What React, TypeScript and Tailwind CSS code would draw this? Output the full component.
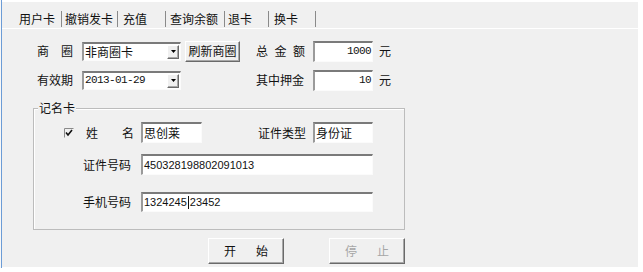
import React from 'react';

const cjk = "font-['Noto_Sans_CJK_SC','Noto_Sans',sans-serif]";
const sunken =
  'bg-white border-t-2 border-l-2 border-r border-b border-t-[#7a7a7a] border-l-[#9a9a9a] border-r-[#fbfbfb] border-b-[#fbfbfb]';
const raised =
  'bg-[#f0f0f0] border border-t-white border-l-white border-r-[#6a6a6a] border-b-[#6a6a6a] shadow-[inset_-1px_-1px_0_#a8a8a8]';

const tabs = [
  { label: '用户卡', w: 'w-[48px]', pl: 'pl-[5px]' },
  { label: '撤销发卡', w: 'w-[56px]', pl: 'pl-[3px]' },
  { label: '充值', w: 'w-[48px]', pl: 'pl-[5px]' },
  { label: '查询余额', w: 'w-[59px]', pl: 'pl-[4px]' },
  { label: '退卡', w: 'w-[44px]', pl: 'pl-[3px]' },
  { label: '换卡', w: 'w-[47px]', pl: 'pl-[5px]' },
];

function Spread({ chars, w }: { chars: string[]; w: string }) {
  return (
    <div className={`flex justify-between ${w}`}>
      {chars.map((c, i) => (
        <span key={i}>{c}</span>
      ))}
    </div>
  );
}

function Combo({ value, mono }: { value: string; mono?: boolean }) {
  return (
    <div className={`${sunken} w-[99px] h-[19px] flex items-center justify-between pr-[1px]`}>
      <span
        className={
          mono
            ? "pl-[1px] text-[11px] tracking-[-0.6px] font-['Liberation_Mono',monospace] leading-none"
            : 'pl-[1px] leading-none'
        }
      >
        {value}
      </span>
      <div className={`${raised} w-[12px] h-[14px] flex items-center justify-center`}>
        <svg width="5" height="3" viewBox="0 0 5 3">
          <path d="M0 0h5L2.5 3z" fill="#000" />
        </svg>
      </div>
    </div>
  );
}

function NumBox({ value }: { value: string }) {
  return (
    <div
      className={`${sunken} w-[60px] h-[21px] flex items-center justify-end pr-[1px] text-[11px] tracking-[-0.6px] font-['Liberation_Mono',monospace]`}
    >
      {value}
    </div>
  );
}

export default function App() {
  return (
    <div className={`w-[643px] h-[272px] bg-white flex ${cjk} text-[12px] text-[#111]`}>
      <div className="w-[1px] h-[268px] bg-[#f8f8f8]" />
      <div className="w-[1px] h-[268px] bg-[#6c9cd6]" />

      <div className="w-[636px] h-[265px] mt-[2px] bg-[#f0f0f0] flex flex-col">
        {/* Tabs */}
        <div className="h-[27px] flex items-end pl-[12px] pb-[1px] border-b border-white shrink-0">
          {tabs.map((t) => (
            <div
              key={t.label}
              className={`${t.w} ${t.pl} h-[16px] flex items-center border-r border-[#8a8a8a] leading-none`}
            >
              {t.label}
            </div>
          ))}
        </div>

        {/* Row 1 */}
        <div className="mt-[11px] h-[22px] flex items-center pl-[35px] shrink-0">
          <Spread chars={['商', '圈']} w="w-[36px]" />
          <div className="ml-[9px]">
            <Combo value="非商圈卡" />
          </div>
          <div className={`${raised} ml-[4px] w-[55px] h-[21px] flex items-center justify-center leading-none`}>
            刷新商圈
          </div>
          <div className="ml-[16px]">
            <Spread chars={['总', '金', '额']} w="w-[49px]" />
          </div>
          <div className="ml-[8px]">
            <NumBox value="1000" />
          </div>
          <span className="ml-[6px]">元</span>
        </div>

        {/* Row 2 */}
        <div className="mt-[7px] h-[22px] flex items-center pl-[35px] shrink-0">
          <span className="w-[36px]">有效期</span>
          <div className="ml-[9px]">
            <Combo value="2013-01-29" mono />
          </div>
          <span className="ml-[75px] w-[48px]">其中押金</span>
          <div className="ml-[9px]">
            <NumBox value="10" />
          </div>
          <span className="ml-[6px]">元</span>
        </div>

        {/* 记名卡 group */}
        <div className="relative mt-[17px] ml-[31px] w-[372px] h-[122px] border border-[#bcbcbc] shadow-[inset_1px_1px_0_#fff] shrink-0">
          <span className="absolute left-[4px] top-[-9px] px-[1px] bg-[#f0f0f0] leading-[16px]">记名卡</span>

          <div className="mt-[13px] h-[21px] flex items-center">
            <svg className="ml-[30px]" width="10" height="10" viewBox="0 0 10 10">
              <path d="M0.5 9.5V0.5H9.5" fill="none" stroke="#8a8a8a" />
              <path d="M2 4.5l2 2.5 4-5" fill="none" stroke="#111" strokeWidth="1.6" />
            </svg>
            <div className="ml-[12px]">
              <Spread chars={['姓', '名']} w="w-[48px]" />
            </div>
            <div className={`${sunken} ml-[7px] w-[61px] h-[21px] flex items-center pl-[1px] leading-none`}>思创莱</div>
            <span className="ml-[56px] w-[48px]">证件类型</span>
            <div className={`${sunken} ml-[7px] w-[60px] h-[21px] flex items-center pl-[1px] leading-none`}>身份证</div>
          </div>

          <div className="mt-[11px] h-[21px] flex items-center">
            <span className="ml-[49px] w-[48px]">证件号码</span>
            <div
              className={`${sunken} ml-[10px] w-[232px] h-[21px] flex items-center pl-[1px] text-[11px] font-['Liberation_Sans',sans-serif]`}
            >
              450328198802091013
            </div>
          </div>

          <div className="mt-[17px] h-[20px] flex items-center">
            <span className="ml-[49px] w-[48px]">手机号码</span>
            <div
              className={`${sunken} ml-[10px] w-[232px] h-[20px] flex items-center pl-[1px] text-[11px] font-['Liberation_Sans',sans-serif]`}
            >
              1324245
              <span className="w-[1px] h-[13px] bg-[#111] mx-[1px]" />
              23452
            </div>
          </div>
        </div>

        {/* Buttons */}
        <div className="mt-[8px] h-[26px] flex pl-[206px] shrink-0">
          <div className={`${raised} w-[76px] h-[26px] flex items-center justify-center gap-[20px] leading-none`}>
            <span>开</span>
            <span>始</span>
          </div>
          <div
            className={`${raised} ml-[45px] w-[76px] h-[26px] flex items-center justify-center gap-[20px] leading-none text-[#a6a6a6]`}
          >
            <span>停</span>
            <span>止</span>
          </div>
        </div>
      </div>
    </div>
  );
}
